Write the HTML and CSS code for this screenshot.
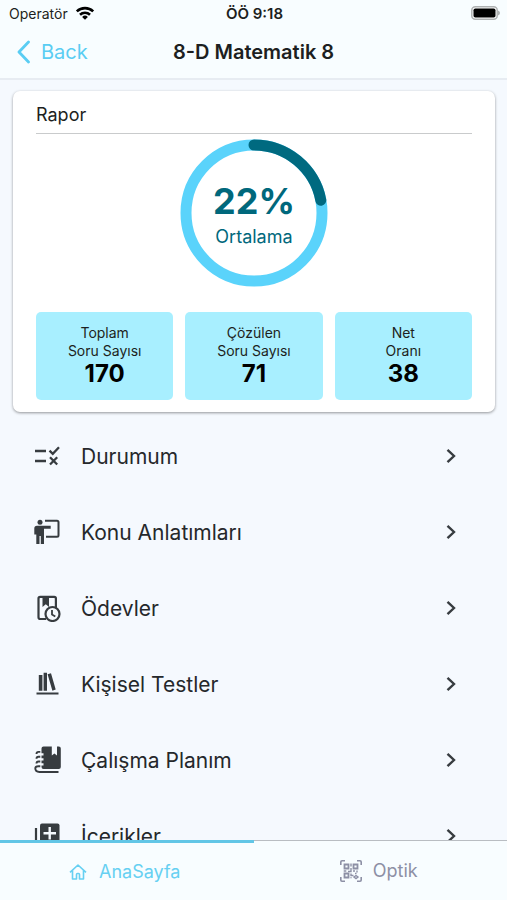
FILE: index.html
```html
<!DOCTYPE html>
<html lang="tr">
<head>
<meta charset="utf-8">
<meta name="viewport" content="width=device-width, initial-scale=1">
<title>8-D Matematik 8</title>
<link rel="stylesheet" href="styles.css">
</head>
<body>
<div class="app">
  <header class="header">
    <div class="status">
      <span class="status-left">Operatör
        <svg width="20" height="14" viewBox="0 0 20 14" aria-hidden="true"><g fill="none" stroke="#000" stroke-width="2.6"><path d="M1.8 5.4a11.8 11.8 0 0 1 16.4 0"/><path d="M5 8.7a7.2 7.2 0 0 1 10 0"/></g><path d="M10 13.8 7.1 10.9a4.1 4.1 0 0 1 5.800 0z"/></svg>
      </span>
      <span class="status-time">ÖÖ 9:18</span>
      <span class="status-right">
        <svg width="30" height="14" viewBox="0 0 30 14" aria-hidden="true"><rect x="1.800" y=".8" width="25.400" height="12.400" rx="3.500" fill="#fff" stroke="#aeb1b2" stroke-width="1.500"/><rect x="3.500" y="2.500" width="22" height="9" rx="1.800"/><path d="M28 4.500q2 .8 2 2.500t-2 2.500z" fill="#aeb1b2"/></svg>
      </span>
    </div>
    <div class="nav">
      <button class="back" type="button">
        <svg width="14" height="24" viewBox="0 0 14 24" aria-hidden="true"><path d="M12.500 2 3 12 12.500 22" fill="none" stroke="currentColor" stroke-width="2.800" stroke-linecap="round" stroke-linejoin="round"/></svg>
        Back
      </button>
      <h1 class="title">8-D Matematik 8</h1>
    </div>
  </header>

  <main class="content">
    <section class="card">
      <h2 class="card-title">Rapor</h2>
      <div class="ring">
        <svg class="ring-chart" width="148" height="148" viewBox="0 0 148 148" aria-hidden="true"><g fill="none" stroke-width="11"><circle cx="74" cy="74" r="68" stroke="#5ad3fb"/><circle cx="74" cy="74" r="68" stroke="#006a80" stroke-linecap="round" pathLength="100" stroke-dasharray="22 78" transform="rotate(-90 74 74)"/></g></svg>
        <div class="ring-text">
          <strong class="ring-value">22%</strong>
          <span class="ring-label">Ortalama</span>
        </div>
      </div>
      <div class="stats">
        <div class="stat"><span>Toplam<br>Soru Sayısı</span><strong>170</strong></div>
        <div class="stat"><span>Çözülen<br>Soru Sayısı</span><strong>71</strong></div>
        <div class="stat"><span>Net<br>Oranı</span><strong>38</strong></div>
      </div>
    </section>

    <nav class="menu">
      <a class="item" href="#durumum">
        <svg class="icon" viewBox="0 0 28 28" aria-hidden="true"><path d="M2 9h11M2 19h11M16.500 8.600l3.300 3.200L26 5.300M17 15.300l7.200 7.200M24.200 15.300 17 22.500" fill="none" stroke="currentColor" stroke-width="2.300"/></svg>
        <span class="label">Durumum</span>
        <svg class="chevron" viewBox="0 0 10 16" aria-hidden="true"><path d="M1.500 1.800 8 8l-6.500 6.200"/></svg>
      </a>
      <a class="item" href="#konu">
        <svg class="icon" viewBox="0 0 28 28" aria-hidden="true"><circle cx="7" cy="4.200" r="2.500" fill="currentColor"/><path d="M4 7.800h13.700v2.900H11V26H7.800v-8H6.500v8H3.300v-9.500h-2v-6Q1.300 7.800 4 7.800z" fill="currentColor"/><path d="M12 2.800h12q1.500 0 1.500 1.500v13q0 1.500-1.500 1.500H13" fill="none" stroke="currentColor" stroke-width="2"/></svg>
        <span class="label">Konu Anlatımları</span>
        <svg class="chevron" viewBox="0 0 10 16" aria-hidden="true"><path d="M1.500 1.800 8 8l-6.500 6.200"/></svg>
      </a>
      <a class="item" href="#odevler">
        <svg class="icon" viewBox="0 0 28 28" aria-hidden="true"><path d="M13 25H7.200q-1.700 0-1.700-1.700V4.500q0-1.700 1.700-1.700h14q1.700 0 1.700 1.700V14" fill="none" stroke="currentColor" stroke-width="2.200"/><path d="M9.500 3H16v10l-3.200-2.700L9.500 13z" fill="currentColor"/><circle cx="19.500" cy="20" r="7" fill="none" stroke="currentColor" stroke-width="2.200"/><path d="M19 16v4.500l3.300 2" fill="none" stroke="currentColor" stroke-width="1.800"/></svg>
        <span class="label">Ödevler</span>
        <svg class="chevron" viewBox="0 0 10 16" aria-hidden="true"><path d="M1.500 1.800 8 8l-6.500 6.200"/></svg>
      </a>
      <a class="item" href="#testler">
        <svg class="icon" viewBox="0 0 28 28" aria-hidden="true"><path d="M5.800 5h3.600v15.800H5.800zM10.600 2.800H14v18h-3.400zM14.600 4.300l3.400-1.100 4.700 16.300-3.300 1.200zM3.500 22.400h22v2.200h-22z" fill="currentColor"/></svg>
        <span class="label">Kişisel Testler</span>
        <svg class="chevron" viewBox="0 0 10 16" aria-hidden="true"><path d="M1.500 1.800 8 8l-6.500 6.200"/></svg>
      </a>
      <a class="item" href="#plan">
        <svg class="icon" viewBox="0 0 28 28" aria-hidden="true"><path d="M10.500.5h8.300v9l2.600-2 2.600 2v-9h1.800q2 0 2 2V21q0 2-2 2H10.500q-2 0-2-2v-1.500h2v-2.300h-2v-2.700h2v-2.300h-2V9.500h2V7.200h-2V2.500q0-2 2-2z" fill="currentColor"/><path d="M7.300 5.900H5.500q-2 0-2 2.100M7.300 10.700H5.500q-2 0-2 2.100M7.300 15.500H5.500q-2 0-2 2.100M7.300 20.300H5.500q-3.200 0-3.200 2 0 3.700 4.200 3.700h19" fill="none" stroke="currentColor" stroke-width="1.900"/></svg>
        <span class="label">Çalışma Planım</span>
        <svg class="chevron" viewBox="0 0 10 16" aria-hidden="true"><path d="M1.500 1.800 8 8l-6.500 6.200"/></svg>
      </a>
      <a class="item" href="#icerikler">
        <svg class="icon" viewBox="0 0 28 28" aria-hidden="true"><rect x="7" y="1.500" width="19.500" height="20" rx="2" fill="currentColor"/><path d="M3 6v17.500Q3 25.500 5 25.500h17" fill="none" stroke="currentColor" stroke-width="2.200"/><path d="M16.700 5v12.500M10.500 11.200h12.500" stroke="#f5f9fe" stroke-width="2.400"/></svg>
        <span class="label">İçerikler</span>
        <svg class="chevron" viewBox="0 0 10 16" aria-hidden="true"><path d="M1.500 1.800 8 8l-6.500 6.200"/></svg>
      </a>
    </nav>
  </main>

  <nav class="tabs">
    <a class="tab tab-active" href="#anasayfa">
      <svg width="18" height="18" viewBox="0 0 18 18" aria-hidden="true"><path d="M1 9.300 9 2l8 7.300M3.500 7.500V16h4v-4.500q0-1 1-1h1q1 0 1 1V16h4V7.500" fill="none" stroke="currentColor" stroke-width="1.600" stroke-linejoin="round"/></svg>
      AnaSayfa
    </a>
    <a class="tab" href="#optik">
      <svg width="24" height="24" viewBox="0 0 24 24" aria-hidden="true"><g fill="none" stroke="currentColor"><path d="M1.800 6V3q0-1.200 1.200-1.200h3M18 1.800h3q1.200 0 1.200 1.200v3M22.200 18v3q0 1.200-1.200 1.200h-3M6 22.200H3q-1.200 0-1.200-1.200v-3" stroke-width="1.600"/><path d="M5.500 5.500h4v4h-4zM14.500 5.500h4v4h-4zM5.500 14.500h4v4h-4z" stroke-width="1.800"/><path d="M12 4.500v3M12 9v3.500H9M4.700 12h2.600M14 12h2M18 11.500v2M12 14.500v2h2.500M12 19.300v-1M16 14.500h1.500M17 16.500l2 1.500-2 1.500-2-1.500z" stroke-width="1.400"/></g></svg>
      Optik
    </a>
  </nav>
</div>
</body>
</html>
```
FILE: styles.css
```css
* {
  box-sizing: border-box;
}

body {
  margin: 0;
  font-family: Inter, "Liberation Sans", sans-serif;
  color: #1d1f21;
  background: #f5f9fe;
}

a {
  color: inherit;
  text-decoration: none;
}

svg {
  display: block;
  flex: none;
}

.app {
  display: flex;
  flex-direction: column;
  height: 100vh;
}

.header {
  background: #f8fdff;
  border-bottom: 2px solid #e7ecf2;
}

.status {
  display: grid;
  grid-template-columns: 1fr auto 1fr;
  align-items: center;
  height: 26px;
  padding: 0 7px 0 9px;
  font-size: 14px;
}

.status-left {
  display: flex;
  align-items: center;
  gap: 7px;
}

.status-time {
  font-size: 15px;
  font-weight: 600;
}

.status-right {
  justify-self: end;
}

.nav {
  display: grid;
  grid-template-columns: 1fr auto 1fr;
  align-items: center;
  height: 52px;
  padding: 0 16px;
}

.back {
  display: flex;
  align-items: center;
  gap: 11px;
  justify-self: start;
  padding: 0;
  border: 0;
  background: none;
  color: #5acdf3;
  font: 20px Inter, "Liberation Sans", sans-serif;
}

.title {
  margin: 0;
  font-size: 20px;
  font-weight: 600;
}

.content {
  flex: 1;
  min-height: 0;
  overflow-y: auto;
  scrollbar-width: none;
}

.card {
  margin: 11px 12px 6px 13px;
  padding: 12px 23px;
  border-radius: 7px;
  background: #fff;
  box-shadow: 0 1px 3px rgba(0, 0, 0, 0.4);
}

.card-title {
  margin: 0;
  padding-bottom: 6px;
  border-bottom: 1px solid #c9cbcc;
  font-size: 18px;
  font-weight: 400;
  line-height: 24px;
}

.ring {
  display: grid;
  place-items: center;
  margin: 5px 0 25px;
}

.ring-chart,
.ring-text {
  grid-area: 1 / 1;
}

.ring-text {
  display: flex;
  flex-direction: column;
  align-items: center;
  gap: 2px;
  padding-top: 6px;
  color: #00687c;
}

.ring-value {
  font-size: 36px;
  font-weight: 700;
  line-height: 40px;
}

.ring-label {
  font-size: 18px;
  line-height: 28px;
}

.stats {
  display: grid;
  grid-template-columns: repeat(3, 1fr);
  gap: 12px;
}

.stat {
  display: flex;
  flex-direction: column;
  align-items: center;
  padding: 12px 4px;
  border-radius: 5px;
  background: #a8efff;
  font-size: 14px;
  line-height: 18px;
  text-align: center;
}

.stat strong {
  color: #000;
  font-size: 24px;
  line-height: 28px;
}

.item {
  display: flex;
  align-items: center;
  height: 76px;
  padding: 0 51px 0 33px;
  color: #373c40;
}

.icon {
  width: 28px;
  height: 28px;
}

.label {
  flex: 1;
  margin-left: 20px;
  color: #25282b;
  font-size: 21px;
}

.chevron {
  width: 10px;
  height: 16px;
  fill: none;
  stroke: currentColor;
  stroke-width: 2.4;
}

.tabs {
  display: grid;
  grid-template-columns: 1fr 1fr;
  height: 60px;
  background: #f8fdff;
}

.tab {
  display: flex;
  align-items: center;
  justify-content: center;
  gap: 10px;
  padding-right: 4px;
  border-top: 1px solid #b9bdc2;
  color: #8d90a5;
  font-size: 18px;
}

.tab-active {
  gap: 12px;
  border-top: 3px solid #62c6e6;
  color: #66d0f2;
}
```
